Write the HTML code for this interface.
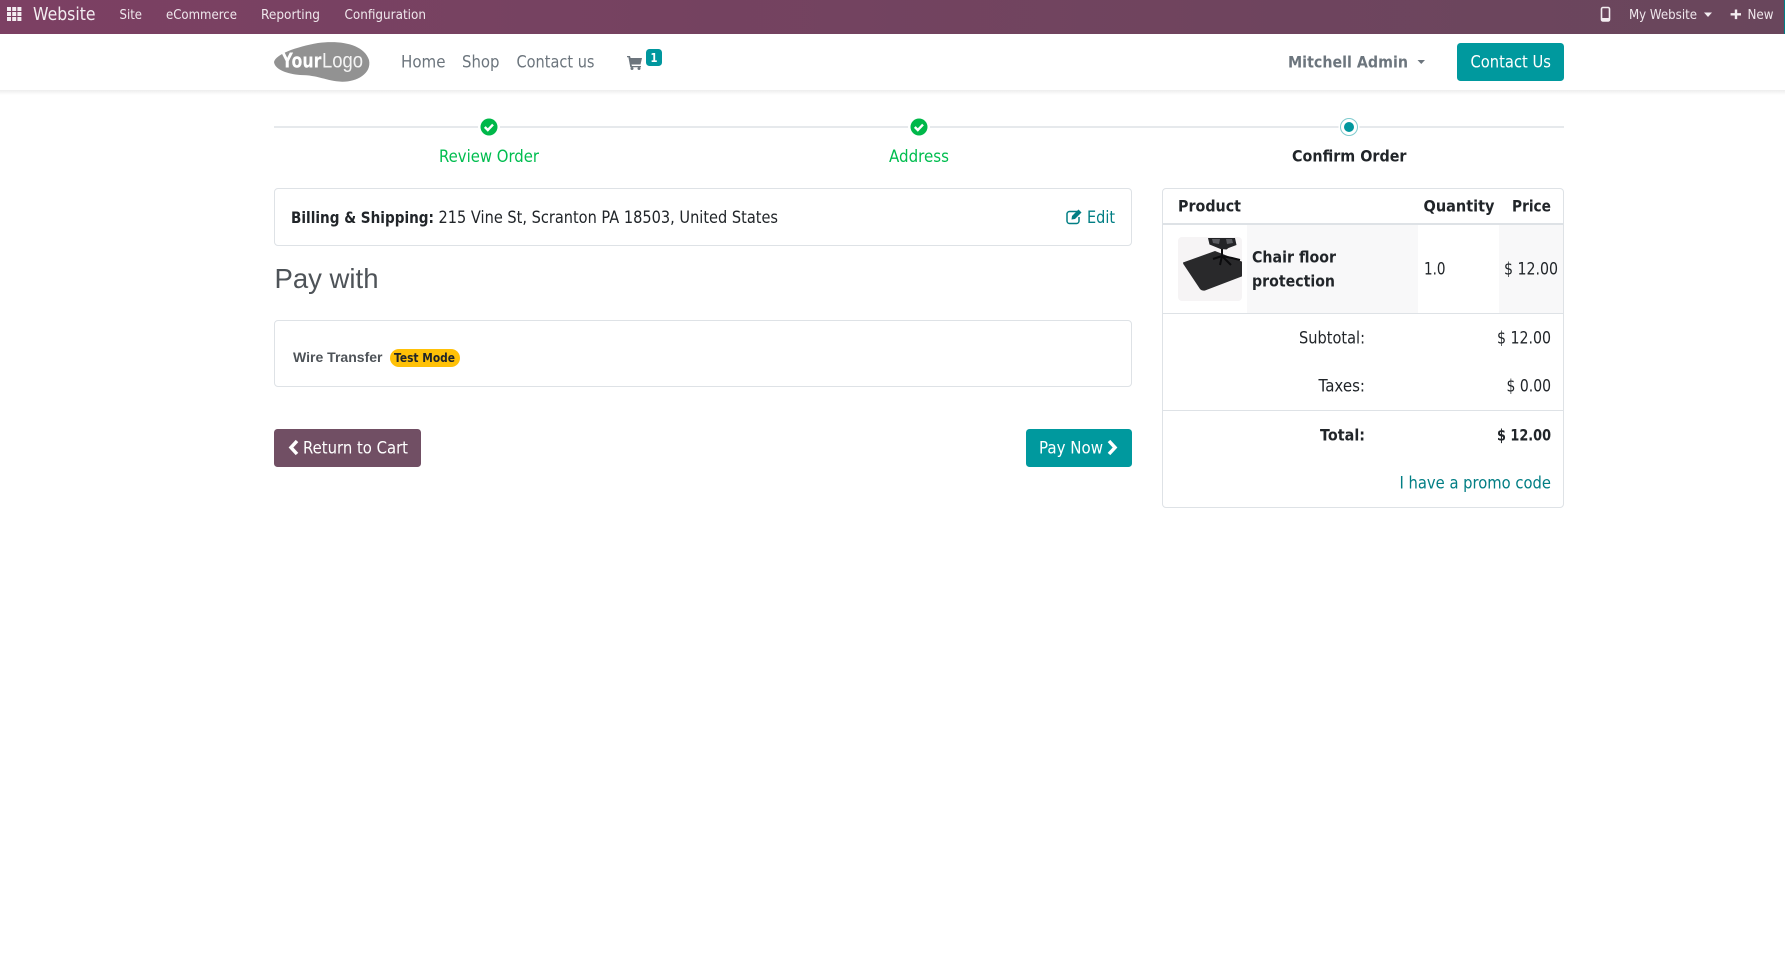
<!DOCTYPE html>
<html><head><meta charset="utf-8"><title>Confirm Order</title>
<style>
html,body{margin:0;padding:0;background:#fff;width:1785px;height:968px;overflow:hidden}
svg{display:block}
text{font-family:"DejaVu Sans","Liberation Sans",sans-serif;font-size:16.5px;fill:#212529}
.b{font-weight:700;font-size:16px}
.w{fill:#fff}
.t{font-size:13.5px;fill:#f0e8ed}
.n{fill:#6c757d}
.g{fill:#00bd4f}
.l{fill:#017e84}
.r{font-family:"Liberation Sans",sans-serif}
</style></head><body>
<svg width="1785" height="968" viewBox="0 0 1785 968" xmlns="http://www.w3.org/2000/svg">
<defs>
<linearGradient id="tb" x1="0" x2="1" y1="0" y2="0"><stop offset="0" stop-color="#7c4063"/><stop offset="1" stop-color="#69465c"/></linearGradient>
<linearGradient id="sh" x1="0" x2="0" y1="0" y2="1"><stop offset="0" stop-color="#000" stop-opacity=".07"/><stop offset="1" stop-color="#000" stop-opacity="0"/></linearGradient>
<clipPath id="ci"><rect x="1178" y="237" width="64" height="64" rx="4"/></clipPath>
</defs>
<rect width="1785" height="968" fill="#fff"/>

<!-- top bar -->
<rect width="1785" height="34" fill="url(#tb)"/>
<rect x="1784" width="1" height="34" fill="#017e84"/>
<g fill="#f3edf1">
<rect x="7" y="7" width="4" height="4"/><rect x="12.2" y="7" width="4" height="4"/><rect x="17.4" y="7" width="4" height="4"/>
<rect x="7" y="12" width="4" height="4"/><rect x="12.2" y="12" width="4" height="4"/><rect x="17.4" y="12" width="4" height="4"/>
<rect x="7" y="17" width="4" height="4"/><rect x="12.2" y="17" width="4" height="4"/><rect x="17.4" y="17" width="4" height="4"/>
</g>
<text x="33" y="20" style="font-size:17.5px;fill:#f3edf1" textLength="62.5" lengthAdjust="spacingAndGlyphs">Website</text>
<text class="t" x="119.5" y="19" textLength="22.5" lengthAdjust="spacingAndGlyphs">Site</text>
<text class="t" x="166" y="19" textLength="71" lengthAdjust="spacingAndGlyphs">eCommerce</text>
<text class="t" x="261" y="19" textLength="59" lengthAdjust="spacingAndGlyphs">Reporting</text>
<text class="t" x="344.5" y="19" textLength="81.5" lengthAdjust="spacingAndGlyphs">Configuration</text>
<!-- phone -->
<rect x="1601.5" y="7.5" width="8" height="13.5" rx="1.5" fill="none" stroke="#f3edf1" stroke-width="1.6"/>
<rect x="1601" y="18" width="9" height="3" rx="1" fill="#f3edf1"/>
<text class="t" x="1629" y="19" textLength="68" lengthAdjust="spacingAndGlyphs">My Website</text>
<path d="M1704 12.500h8l-4 4.500z" fill="#f3edf1"/>
<path d="M1734.800 9.500h2.400v3.600h3.800v2.400h-3.800v3.600h-2.400v-3.600h-4.200v-2.400h4.200z" fill="#f3edf1"/>
<text class="t" x="1747.500" y="19" textLength="26" lengthAdjust="spacingAndGlyphs">New</text>

<!-- nav -->
<rect y="90" width="1785" height="5" fill="url(#sh)"/>
<path d="M274 62C276 54 296 47 318 43C340 40 364 44 369 60C372 74 356 82 342 81.700C326 81 318 75 300 75C288 74 275 70 274 62Z" fill="#929292"/>
<text class="w" x="281.500" y="67.500" style="font-size:20px;font-weight:700" textLength="40" lengthAdjust="spacingAndGlyphs">Your</text>
<text class="w r" x="322" y="67.500" style="font-size:21px;opacity:.9" textLength="41" lengthAdjust="spacingAndGlyphs">Logo</text>
<text class="n" x="401" y="67.600" textLength="44.500" lengthAdjust="spacingAndGlyphs">Home</text>
<text class="n" x="462" y="67.600" textLength="37.500" lengthAdjust="spacingAndGlyphs">Shop</text>
<text class="n" x="516.500" y="67.600" textLength="78" lengthAdjust="spacingAndGlyphs">Contact us</text>
<g transform="translate(0,-1)">
<path d="M627 57h3l.6 2H642l-1.500 6.500H631.500l.4 1.500H641v1.200H630.300L628.400 58.300H627z" fill="#6c757d"/>
<circle cx="632" cy="69.500" r="1.500" fill="#6c757d"/><circle cx="639" cy="69.500" r="1.500" fill="#6c757d"/>
</g>
<rect x="646" y="49" width="16" height="17" rx="3.500" fill="#00979e"/>
<text class="w" x="650.500" y="62" style="font-size:12px;font-weight:700" textLength="7" lengthAdjust="spacingAndGlyphs">1</text>
<text class="n b" x="1288" y="67.600" textLength="120" lengthAdjust="spacingAndGlyphs">Mitchell Admin</text>
<path d="M1417.500 60h7.500l-3.750 4z" fill="#6c757d"/>
<rect x="1457" y="43" width="107" height="38" rx="3.500" fill="#00999e"/>
<text class="w" x="1470.500" y="67.600" textLength="80.500" lengthAdjust="spacingAndGlyphs">Contact Us</text>

<!-- wizard -->
<rect x="274" y="126" width="1290" height="2" fill="#e6e9ec"/>
<circle cx="489" cy="127" r="11" fill="#fff"/><circle cx="489" cy="127" r="8.500" fill="#00b84a"/>
<path d="M484.800 127l3 3 5.200-5.400" fill="none" stroke="#fff" stroke-width="2.400"/>
<circle cx="919" cy="127" r="11" fill="#fff"/><circle cx="919" cy="127" r="8.500" fill="#00b84a"/>
<path d="M914.800 127l3 3 5.200-5.400" fill="none" stroke="#fff" stroke-width="2.400"/>
<circle cx="1349" cy="127" r="10.500" fill="#fff"/><circle cx="1349" cy="127" r="8.500" fill="#fff" stroke="#7fcbce" stroke-width="1"/><circle cx="1349" cy="127" r="5" fill="#00979e"/>
<text class="g" x="439" y="162" textLength="100" lengthAdjust="spacingAndGlyphs">Review Order</text>
<text class="g" x="889" y="162" textLength="60" lengthAdjust="spacingAndGlyphs">Address</text>
<text class="b" x="1292" y="161.700" textLength="114.500" lengthAdjust="spacingAndGlyphs">Confirm Order</text>

<!-- billing -->
<rect x="274.500" y="188.500" width="857" height="57" rx="3.500" fill="#fff" stroke="#dee2e6"/>
<text class="b" x="291" y="222.800" textLength="143" lengthAdjust="spacingAndGlyphs">Billing &amp; Shipping:</text>
<text x="438.500" y="222.800" textLength="339.500" lengthAdjust="spacingAndGlyphs">215 Vine St, Scranton PA 18503, United States</text>
<g transform="translate(0,-1.500)">
<path d="M1078 213h-8.500a2.500 2.500 0 0 0-2.500 2.500v7a2.500 2.500 0 0 0 2.500 2.500h7a2.500 2.500 0 0 0 2.500-2.500v-4" fill="none" stroke="#017e84" stroke-width="1.500"/>
<path d="M1072 217.500l6.500-6.500 3 3-6.500 6.500-3.500.5z" fill="#017e84"/>
</g>
<text class="l" x="1087" y="222.800" textLength="28" lengthAdjust="spacingAndGlyphs">Edit</text>

<!-- pay with -->
<text class="r" x="274.500" y="288" style="font-size:28px;fill:#4e5358" textLength="104" lengthAdjust="spacingAndGlyphs">Pay with</text>
<rect x="274.500" y="320.500" width="857" height="66" rx="3.500" fill="#fff" stroke="#dee2e6"/>
<text class="r" x="293" y="362" style="font-size:14px;font-weight:700;fill:#4e5358" textLength="89.500" lengthAdjust="spacingAndGlyphs">Wire Transfer</text>
<rect x="390" y="349" width="70" height="18" rx="9" fill="#ffc107"/>
<text x="394" y="362" style="font-size:12.500px;font-weight:700" textLength="61" lengthAdjust="spacingAndGlyphs">Test Mode</text>

<!-- buttons -->
<rect x="274" y="429" width="147" height="38" rx="3.500" fill="#714f64"/>
<path d="M297 441l-6 6.500 6 6.500" fill="none" stroke="#fff" stroke-width="3.500"/>
<text class="w" x="303" y="453.500" textLength="105" lengthAdjust="spacingAndGlyphs">Return to Cart</text>
<rect x="1026" y="429" width="106" height="38" rx="3.500" fill="#00999e"/>
<text class="w" x="1039" y="453.500" textLength="64" lengthAdjust="spacingAndGlyphs">Pay Now</text>
<path d="M1109 441l6 6.500-6 6.500" fill="none" stroke="#fff" stroke-width="3.500"/>

<!-- summary -->
<rect x="1162.500" y="188.500" width="401" height="319" rx="3.500" fill="#fff" stroke="#dee2e6"/>
<rect x="1163" y="223" width="400" height="2" fill="#dee2e6"/>
<rect x="1247" y="225" width="171" height="88" fill="#f8f8f9"/>
<rect x="1499" y="225" width="64" height="88" fill="#f8f8f9"/>
<rect x="1163" y="313" width="400" height="1" fill="#dee2e6"/>
<rect x="1163" y="410" width="400" height="1" fill="#dee2e6"/>
<text class="b" x="1178" y="211.500" textLength="63" lengthAdjust="spacingAndGlyphs">Product</text>
<text class="b" x="1423.500" y="211.500" textLength="71" lengthAdjust="spacingAndGlyphs">Quantity</text>
<text class="b" x="1512" y="211.500" textLength="39" lengthAdjust="spacingAndGlyphs">Price</text>
<g clip-path="url(#ci)">
<rect x="1178" y="237" width="64" height="64" fill="#f6f4f5"/>
<path d="M1183 262.500L1215 251L1243 262V276L1205 290.500Q1202 291 1200 289L1184 265Q1183 264 1183 262.500Z" fill="#29292b"/>
<path d="M1208 238h27l1.500 7-8 3-2 1.500-6-.5-11-4.500z" fill="#232427"/>
<path d="M1212 239h8l-1 5-6-1zM1226 239h6l1 4-6 1z" fill="#5a5b60"/>
<path d="M1222 249v8M1222 256l-9 3M1222 256l10 2 8 2M1222 256l-2 9M1222 256l9 9" fill="none" stroke="#0b0b0d" stroke-width="2"/>
</g>
<text class="b" x="1252" y="262.500" textLength="84" lengthAdjust="spacingAndGlyphs">Chair floor</text>
<text class="b" x="1252" y="286.500" textLength="83" lengthAdjust="spacingAndGlyphs">protection</text>
<text x="1424" y="274.500" textLength="21.500" lengthAdjust="spacingAndGlyphs">1.0</text>
<text x="1504" y="274.500" textLength="54" lengthAdjust="spacingAndGlyphs">$ 12.00</text>
<text x="1299" y="343.700" textLength="66" lengthAdjust="spacingAndGlyphs">Subtotal:</text>
<text x="1497" y="343.700" textLength="54" lengthAdjust="spacingAndGlyphs">$ 12.00</text>
<text x="1318.500" y="391.700" textLength="46.500" lengthAdjust="spacingAndGlyphs">Taxes:</text>
<text x="1506.500" y="391.700" textLength="44.500" lengthAdjust="spacingAndGlyphs">$ 0.00</text>
<text class="b" x="1320" y="440.300" textLength="45" lengthAdjust="spacingAndGlyphs">Total:</text>
<text class="b" x="1497" y="440.300" textLength="54" lengthAdjust="spacingAndGlyphs">$ 12.00</text>
<text class="l" x="1399.500" y="488.700" textLength="151.500" lengthAdjust="spacingAndGlyphs">I have a promo code</text>
</svg>
</body></html>
